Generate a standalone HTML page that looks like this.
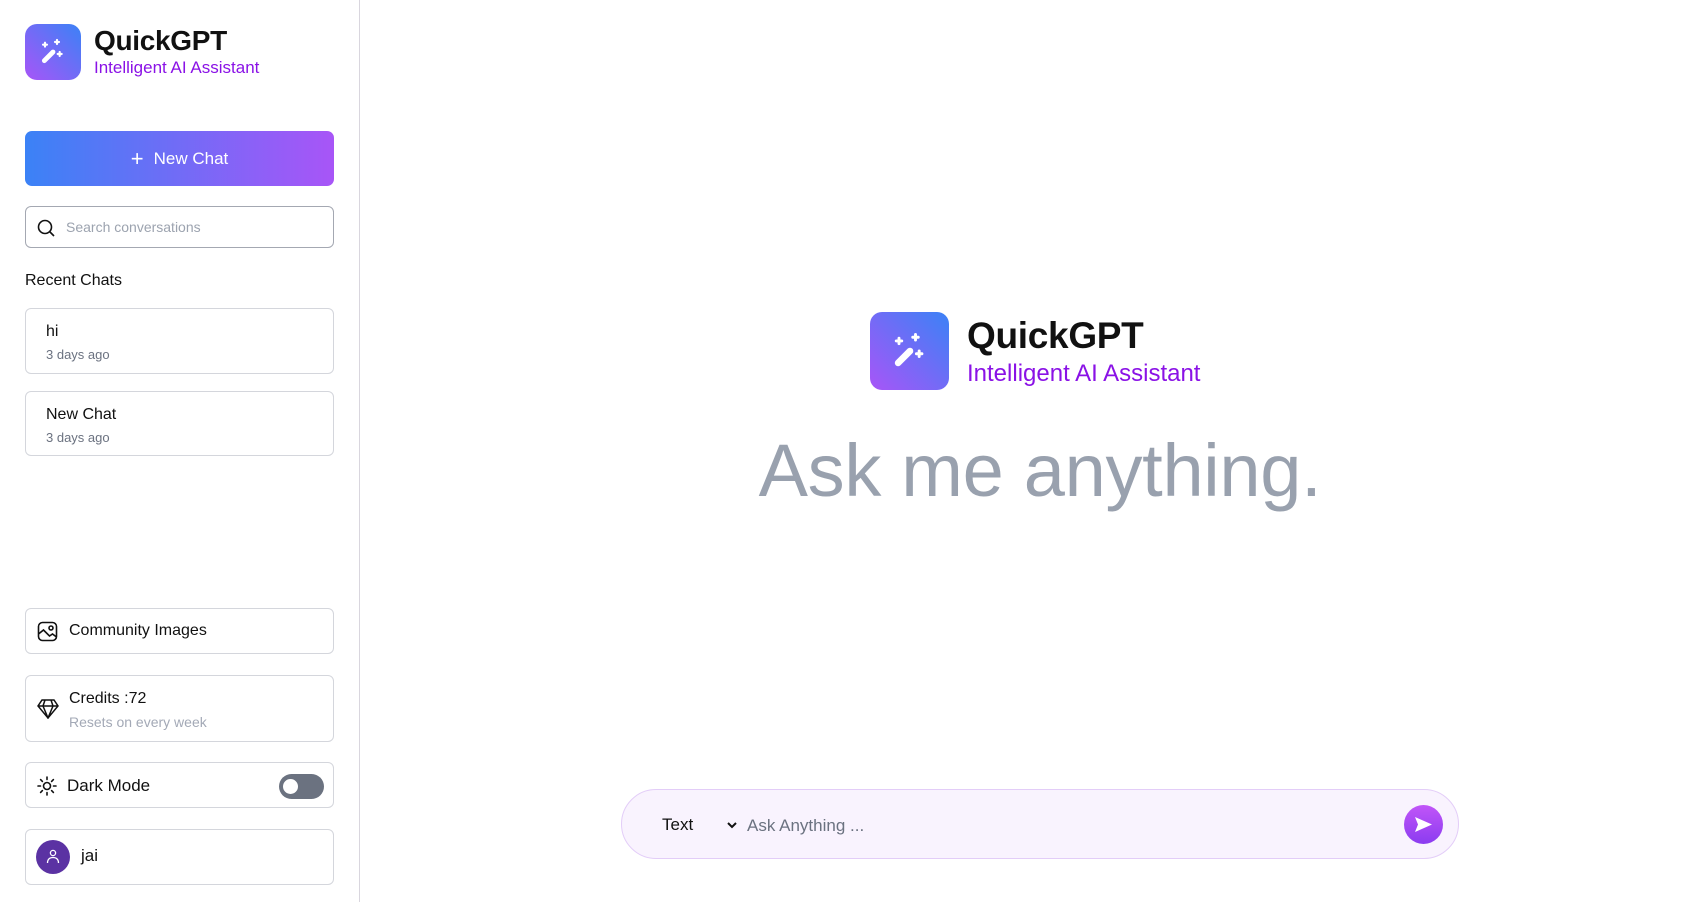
<!DOCTYPE html>
<html><head><meta charset="utf-8"><style>
*{box-sizing:border-box;margin:0;padding:0}
body{width:1701px;height:902px;background:#fff;font-family:"Liberation Sans",sans-serif;color:#111;position:relative;overflow:hidden}
.abs{position:absolute}
.side{position:absolute;left:0;top:0;width:360px;height:902px;border-right:1px solid #d9d6de}
.logo{border-radius:12px;display:flex;align-items:center;justify-content:center}
.box{position:absolute;left:25px;width:309px;border:1px solid #d4d6dc;border-radius:6px;background:#fff}
</style></head><body>
<div class="side">
  <div class="abs logo" style="left:25px;top:24px;width:56px;height:56px;background:linear-gradient(225deg,#3b82f6,#a855f7)">
    <svg width="32" height="32" viewBox="0 0 24 24" fill="none" stroke="#fff" stroke-linecap="round"><path d="M5.5 18.5 L12 12" stroke-width="3.6"/><path d="M6 5v3M4.5 6.5h3M15 3v3M13.5 4.5h3M17 12v3M15.5 13.5h3" stroke-width="1.6"/></svg>
  </div>
  <div class="abs" style="left:94px;top:25px;font-size:28px;font-weight:bold;letter-spacing:-0.3px">QuickGPT</div>
  <div class="abs" style="left:94px;top:58px;font-size:17px;color:#8a12e6">Intelligent AI Assistant</div>
  <div class="abs" style="left:25px;top:131px;width:309px;height:55px;border-radius:7px;background:linear-gradient(90deg,#3b82f6,#a855f7);color:#fff;font-size:17px;display:flex;align-items:center;justify-content:center"><span style="font-size:22px;margin-right:10px">+</span>New Chat</div>
  <div class="box" style="top:206px;height:42px;border-color:#a4a8b2;border-radius:6px">
    <svg class="abs" style="left:10px;top:11px" width="20" height="20" viewBox="0 0 20 20" fill="none" stroke="#111" stroke-width="1.6"><circle cx="9" cy="9" r="6.5"/><path d="M14 14l4 4"/></svg>
    <div class="abs" style="left:40px;top:12px;font-size:14px;color:#9ca3af">Search conversations</div>
  </div>
  <div class="abs" style="left:25px;top:272px;font-size:16px">Recent Chats</div>
  <div class="box" style="top:308px;height:66px"><div class="abs" style="left:20px;top:14px;font-size:16px">hi</div><div class="abs" style="left:20px;top:38px;font-size:13px;color:#6b7280">3 days ago</div></div>
  <div class="box" style="top:391px;height:65px"><div class="abs" style="left:20px;top:14px;font-size:16px">New Chat</div><div class="abs" style="left:20px;top:38px;font-size:13px;color:#6b7280">3 days ago</div></div>
  <div class="box" style="top:608px;height:46px">
    <svg class="abs" style="left:11px;top:12px" width="21" height="21" viewBox="0 0 21 21" fill="none" stroke="#111" stroke-width="1.6"><rect x="1.5" y="1.5" width="18" height="18" rx="4"/><circle cx="14" cy="7" r="2"/><path d="M1.5 13l5-4 6 6 3-2 4 3"/></svg>
    <div class="abs" style="left:43px;top:13px;font-size:16px">Community Images</div>
  </div>
  <div class="box" style="top:675px;height:67px">
    <svg class="abs" style="left:11px;top:23px" width="22" height="20" viewBox="0 0 22 20" fill="none" stroke="#111" stroke-width="1.5"><path d="M5 1h12l4 6-10 12L1 7z M1 7h20 M8 1l-2 6 5 12 5-12-2-6"/></svg>
    <div class="abs" style="left:43px;top:14px;font-size:16px">Credits :72</div>
    <div class="abs" style="left:43px;top:38px;font-size:14px;color:#a3a9b6">Resets on every week</div>
  </div>
  <div class="box" style="top:762px;height:46px">
    <svg class="abs" style="left:11px;top:13px" width="20" height="20" viewBox="0 0 20 20" fill="none" stroke="#111" stroke-width="1.6" stroke-linecap="round"><circle cx="10" cy="10" r="3.5"/><path d="M10 1v2.5M10 16.5V19M1 10h2.5M16.5 10H19M3.6 3.6l1.8 1.8M14.6 14.6l1.8 1.8M3.6 16.4l1.8-1.8M14.6 5.4l1.8-1.8"/></svg>
    <div class="abs" style="left:41px;top:13px;font-size:17px">Dark Mode</div>
    <div class="abs" style="left:253px;top:11px;width:45px;height:25px;border-radius:13px;background:#6b7280"><div class="abs" style="left:4px;top:5px;width:15px;height:15px;border-radius:50%;background:#fff"></div></div>
  </div>
  <div class="box" style="top:829px;height:56px">
    <div class="abs" style="left:10px;top:10px;width:34px;height:34px;border-radius:50%;background:#5b32a3">
      <svg class="abs" style="left:9px;top:8px" width="16" height="17" viewBox="0 0 16 17" fill="none" stroke="#fff" stroke-width="1.3"><circle cx="8" cy="5" r="2.6"/><path d="M2.5 15c0-4 2.5-5.5 5.5-5.5s5.5 1.5 5.5 5.5"/></svg>
    </div>
    <div class="abs" style="left:55px;top:16px;font-size:17px">jai</div>
  </div>
</div>
<div class="abs logo" style="left:870px;top:312px;width:79px;height:78px;background:linear-gradient(225deg,#3b82f6,#a855f7)">
  <svg width="44" height="44" viewBox="0 0 24 24" fill="none" stroke="#fff" stroke-linecap="round"><path d="M5.5 18.5 L12 12" stroke-width="3.6"/><path d="M6 5v3M4.5 6.5h3M15 3v3M13.5 4.5h3M17 12v3M15.5 13.5h3" stroke-width="1.6"/></svg>
</div>
<div class="abs" style="left:967px;top:315px;font-size:37px;font-weight:bold;letter-spacing:-0.3px">QuickGPT</div>
<div class="abs" style="left:967px;top:360px;font-size:24px;color:#8a12e6">Intelligent AI Assistant</div>
<div class="abs" style="left:700px;width:680px;text-align:center;top:428px;font-size:74px;color:#99a1ae;letter-spacing:-0.3px">Ask me anything.</div>
<div class="abs" style="left:621px;top:789px;width:838px;height:70px;border-radius:35px;background:#f9f3fe;border:1px solid #e3cdf8">
  <div class="abs" style="left:40px;top:25px;font-size:17px">Text</div>
  <svg class="abs" style="left:104px;top:30px" width="12" height="10" viewBox="0 0 12 10" fill="none" stroke="#111" stroke-width="2"><path d="M2 3l4 4 4-4"/></svg>
  <div class="abs" style="left:125px;top:26px;font-size:17px;color:#6b7280">Ask Anything ...</div>
  <div class="abs" style="left:782px;top:15px;width:39px;height:39px;border-radius:50%;background:linear-gradient(180deg,#c155f8,#8b3cf0)">
    <svg class="abs" style="left:10px;top:11px" width="19" height="17" viewBox="0 0 19 17"><path d="M1 1l17 7.5L1 16l3-7.5z" fill="#fff"/></svg>
  </div>
</div>
</body></html>
